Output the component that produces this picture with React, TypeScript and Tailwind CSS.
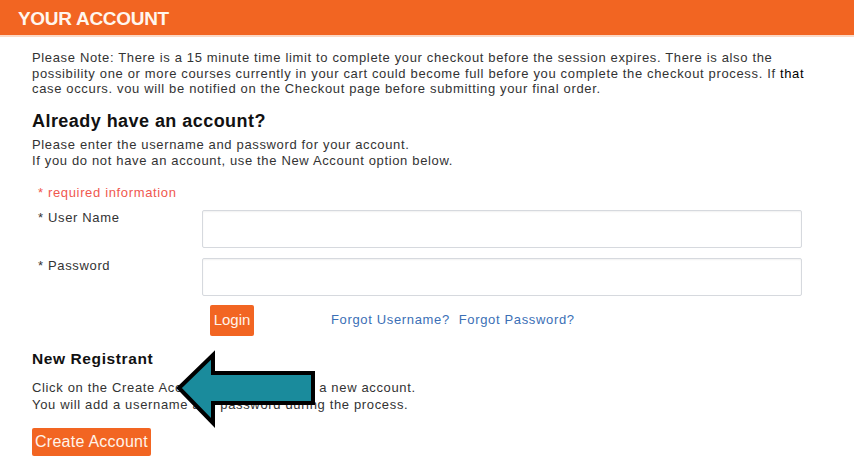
const orange = "bg-[#f26522]";
const body = "text-[13px] tracking-[0.65px] text-[#333]";

function Arrow() {
  return (
    <svg
      className="pointer-events-none absolute left-[174px] top-[350px]"
      width="144"
      height="80"
      viewBox="0 0 144 80"
    >
      <polygon
        points="5,38 39,5 39,23 139,23 139,53 39,53 39,73"
        fill="#1a8b9c"
        stroke="#000"
        strokeWidth="4"
        strokeLinejoin="miter"
      />
    </svg>
  );
}

export default function App() {
  return (
    <div className="relative h-[476px] w-[854px] overflow-hidden bg-white font-['Liberation_Sans',Arial,sans-serif] text-[#222]">
      <div className={`${orange} h-[37px] border-b-2 border-[#fbd9c6] pl-[18px] pt-[9px]`}>
        <h1 className="text-[19px] font-bold leading-none tracking-[-0.3px] text-[#fff6ee]">
          YOUR ACCOUNT
        </h1>
      </div>

      <div className="px-[32px]">
        <p className={`mt-[13px] leading-[15.5px] whitespace-nowrap ${body}`}>
          Please Note: There is a 15 minute time limit to complete your checkout before the session expires. There is also the
          <br />
          possibility one or more courses currently in your cart could become full before you complete the checkout process. If{" "}
          <span className="text-black">that</span>
          <br />
          case occurs. vou will be notified on the Checkout page before submitting your final order.
        </p>

        <h2 className="mt-[13px] text-[18px] font-bold leading-[22px] tracking-[0.45px] text-[#111]">
          Already have an account?
        </h2>
        <p className={`mt-[5px] leading-[16px] ${body}`}>
          Please enter the username and password for your account.
          <br />
          If you do not have an account, use the New Account option below.
        </p>

        <div className="mt-[16px] pl-[6px] text-[13px] leading-[16px] tracking-[0.65px] text-[#f0584f]">
          * required information
        </div>

        <div className="mt-[9px] flex flex-col gap-[10px]">
          <div className="flex items-start">
            <label className={`w-[170px] pl-[6px] leading-[16px] ${body}`}>* User Name</label>
            <input className="h-[38px] w-[600px] rounded-[2px] border border-[#d6d9de] bg-white shadow-[inset_0_1px_2px_rgba(0,0,0,0.06)] outline-none" />
          </div>
          <div className="flex items-start">
            <label className={`w-[170px] pl-[6px] leading-[16px] ${body}`}>* Password</label>
            <input
              type="password"
              className="h-[38px] w-[600px] rounded-[2px] border border-[#d6d9de] bg-white shadow-[inset_0_1px_2px_rgba(0,0,0,0.06)] outline-none"
            />
          </div>
        </div>

        <div className="mt-[9px] flex items-center pl-[178px]">
          <button className={`${orange} h-[31px] w-[44px] rounded-[2px] text-[15px] text-[#fff3ea]`}>Login</button>
          <div className="ml-[77px] flex gap-[9px] text-[13px] tracking-[0.65px] text-[#3b6fb6]">
            <a>Forgot Username?</a>
            <a>Forgot Password?</a>
          </div>
        </div>

        <h2 className="mt-[13px] text-[15.5px] font-bold leading-[20px] tracking-[0.6px] text-[#111]">
          New Registrant
        </h2>
        <p className={`mt-[10px] leading-[17px] ${body}`}>
          Click on the Create Account button to create a new account.
          <br />
          You will add a username and password during the process.
        </p>

        <button className={`${orange} mt-[15px] h-[28px] w-[119px] rounded-[2px] text-[16px] tracking-[0.25px] text-[#fff3ea]`}>
          Create Account
        </button>
      </div>

      <Arrow />
    </div>
  );
}
